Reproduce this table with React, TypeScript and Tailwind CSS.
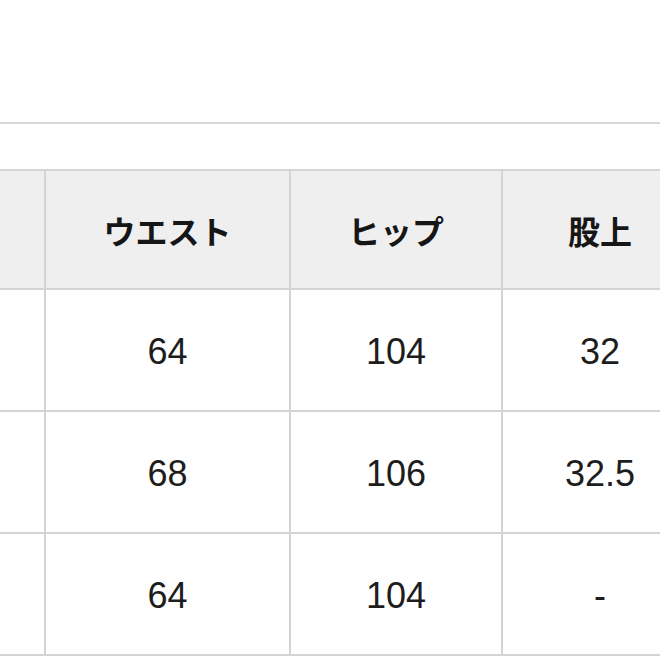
export default function App() {
  const headers = ["", "ウエスト", "ヒップ", "股上"]
  const rows = [
    ["", "64", "104", "32"],
    ["", "68", "106", "32.5"],
    ["", "64", "104", "-"],
  ]

  return (
    <div className="w-[660px] h-[660px] overflow-hidden bg-white font-['Liberation_Sans','Noto_Sans_CJK_JP',sans-serif]">
      {/* top divider */}
      <div className="mt-[122px] h-[2px] w-full bg-[#d7d7d7]" />

      {/* size table */}
      <div className="mt-[45px] ml-[-200px] w-[900px] bg-[#d4d4d4] p-[2px] grid grid-cols-[242px_243px_210px_194px] gap-[2px]">
        {headers.map((h, i) => (
          <div
            key={i}
            className="h-[117px] bg-[#efefef] flex items-center justify-center text-[32px] font-bold text-[#161616] font-['Noto_Sans_CJK_JP',sans-serif]"
          >
            {h}
          </div>
        ))}
        {rows.map((r, ri) =>
          r.map((c, ci) => (
            <div
              key={`${ri}-${ci}`}
              className="h-[120px] pt-[3px] bg-white flex items-center justify-center text-[36px] text-[#1d1d1d]"
            >
              {c}
            </div>
          ))
        )}
      </div>
    </div>
  )
}
